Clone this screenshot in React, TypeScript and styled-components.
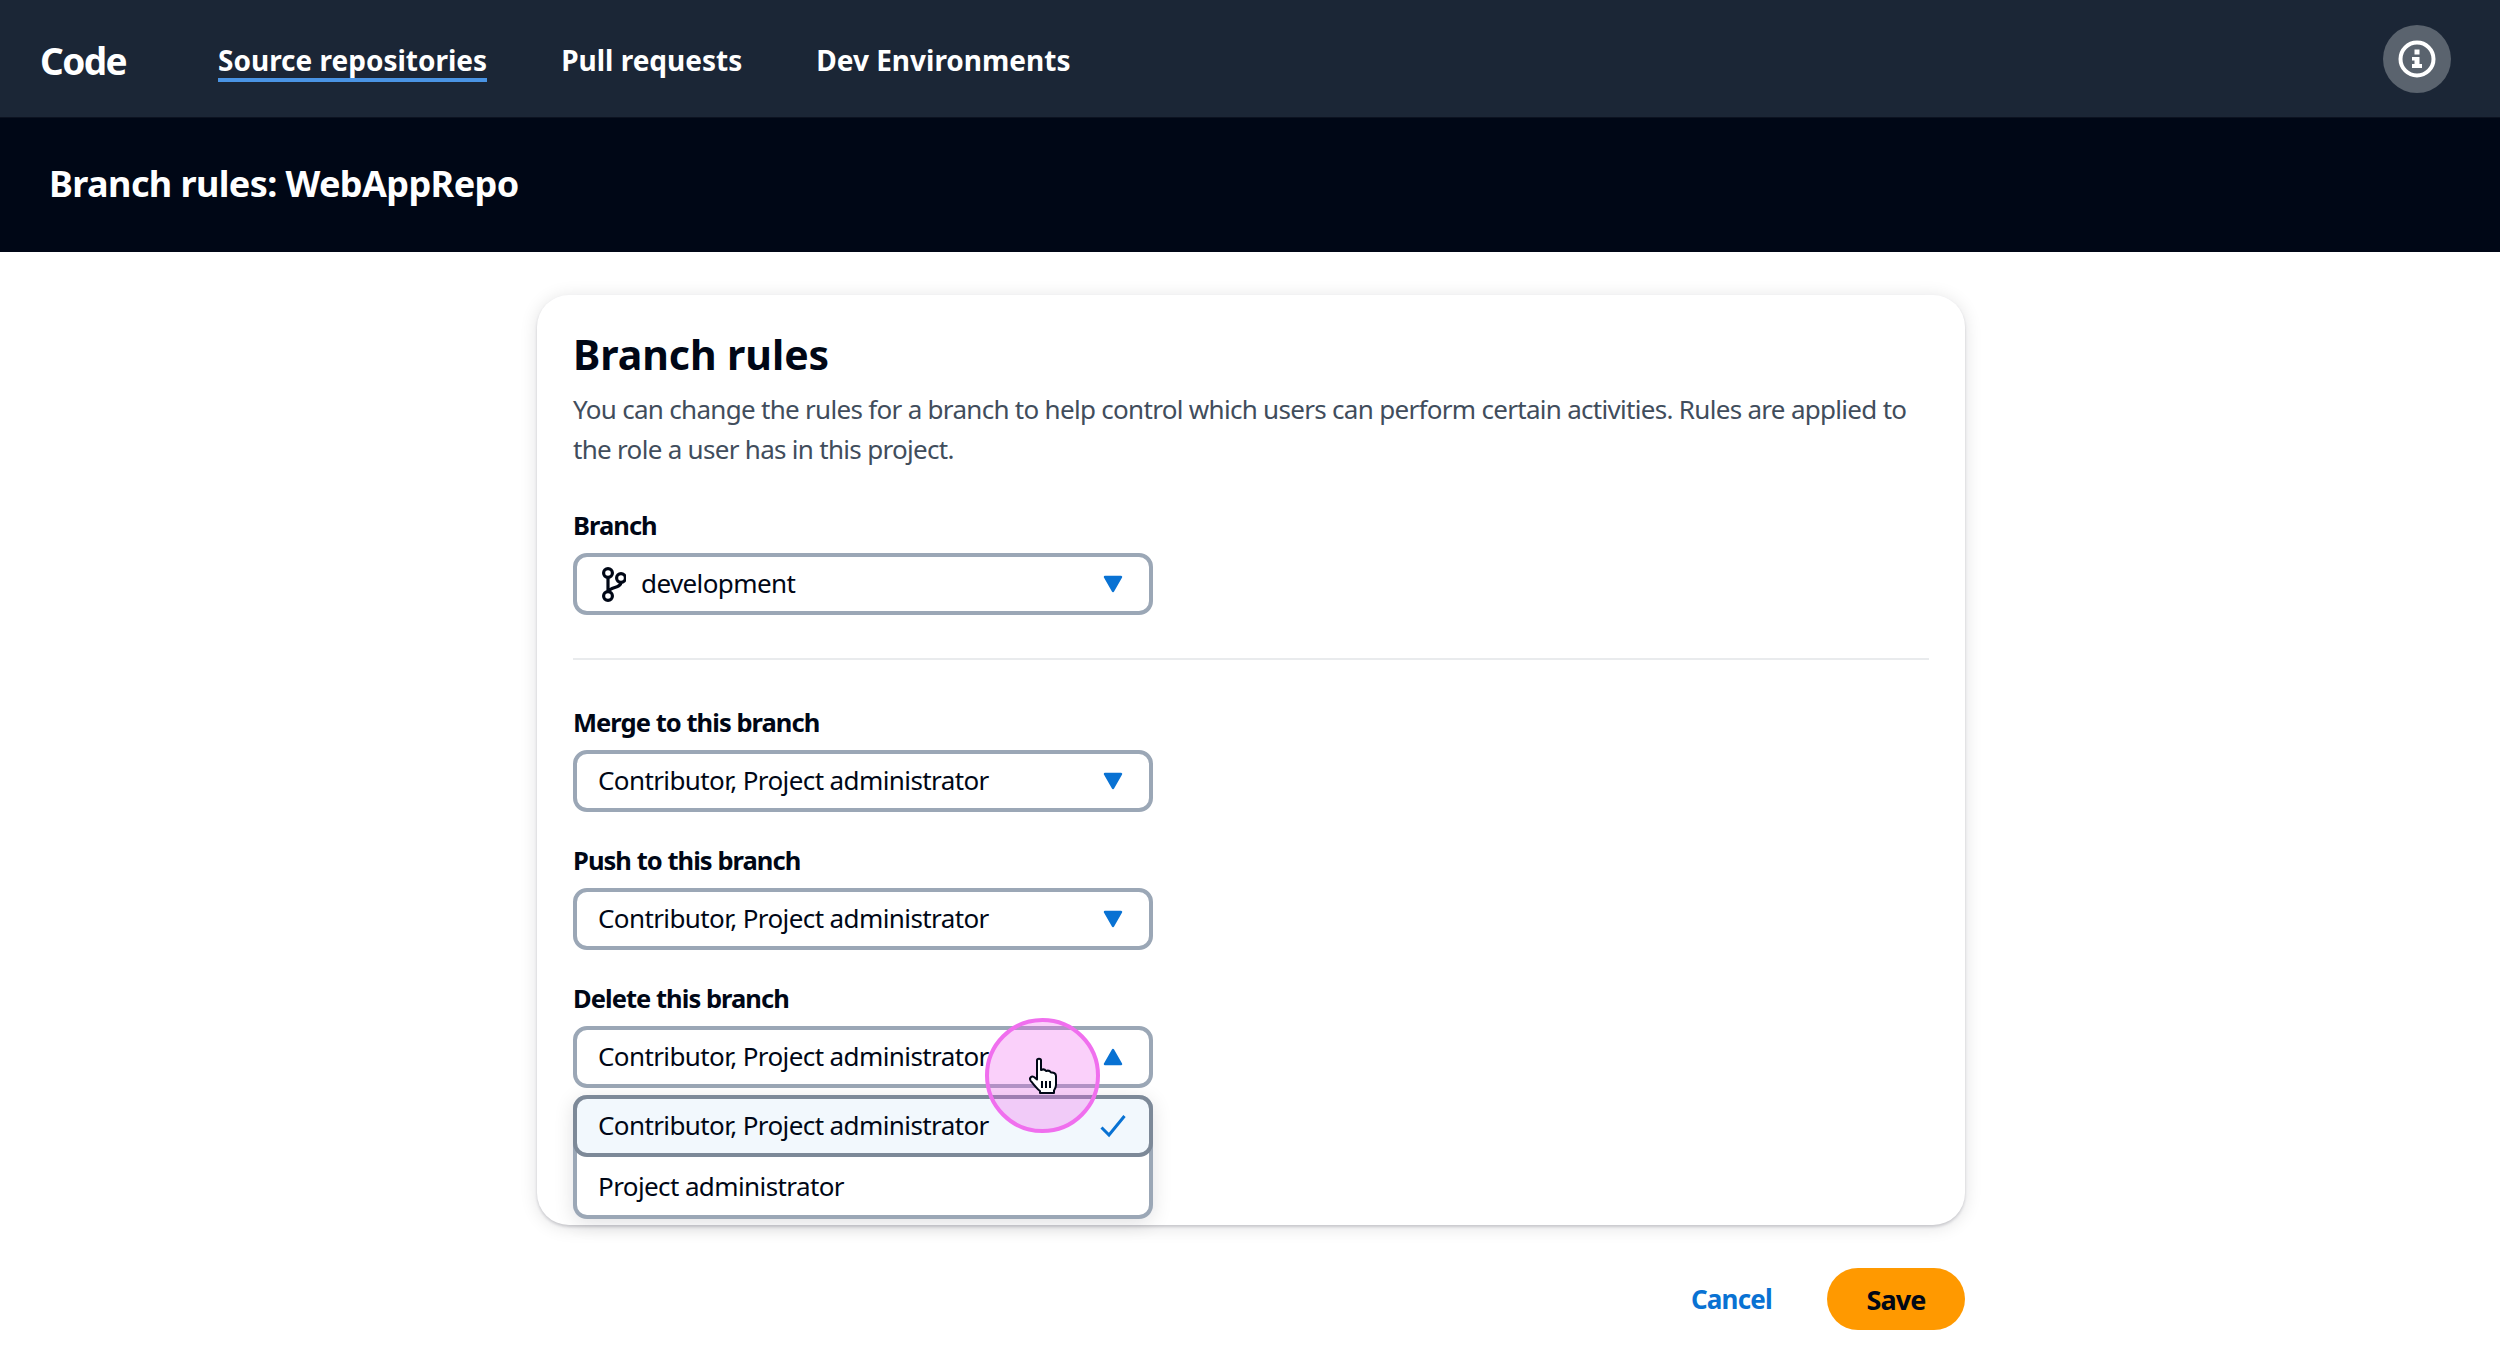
import React from 'react';
import styled, { createGlobalStyle } from 'styled-components';

const GlobalStyle = createGlobalStyle`
  html, body {
    margin: 0;
    padding: 0;
    background: #ffffff;
    font-family: 'Noto Sans', 'Open Sans', sans-serif;
    color: #000716;
  }
`;

const Page = styled.div`
  width: 2500px;
  height: 1345px;
  overflow: hidden;
  display: flex;
  flex-direction: column;
`;

const TopNav = styled.header`
  height: 117px;
  background: #1b2636;
  display: flex;
  align-items: center;
  padding: 3px 49px 0 40px;
  box-sizing: border-box;
  flex-shrink: 0;
`;

const Brand = styled.div`
  font-size: 37px;
  font-weight: 700;
  color: #ffffff;
  letter-spacing: -1.6px;
  width: 178px;
`;

const NavLinks = styled.nav`
  display: flex;
  gap: 74px;
  flex: 1;
`;

const NavLink = styled.a<{ $active?: boolean }>`
  position: relative;
  font-size: 28px;
  font-weight: 700;
  letter-spacing: 0;
  color: #ffffff;

  ${(p) =>
    p.$active &&
    `&::after {
      content: '';
      position: absolute;
      left: 0;
      right: 0;
      bottom: -3px;
      height: 4px;
      background: #4a94e4;
    }`}
`;

const InfoButton = styled.button`
  width: 68px;
  height: 68px;
  margin-top: -2px;
  border-radius: 50%;
  border: none;
  padding: 0;
  background: #5a636e;
  display: flex;
  align-items: center;
  justify-content: center;
`;

const SubHeader = styled.div`
  height: 135px;
  background: #000716;
  border-top: 1px solid #0c1220;
  box-sizing: border-box;
  display: flex;
  align-items: center;
  padding: 0 0 3px 49px;
  flex-shrink: 0;
`;

const SubTitle = styled.h1`
  margin: 0;
  font-size: 36px;
  font-weight: 700;
  letter-spacing: -0.6px;
  color: #ffffff;
`;

const Main = styled.main`
  width: 1428px;
  margin: 43px 0 0 537px;
  display: flex;
  flex-direction: column;
`;

const Card = styled.section`
  box-sizing: border-box;
  height: 930px;
  padding: 32px 36px 0;
  background: #ffffff;
  border-radius: 32px;
  box-shadow: 0 2px 3px rgba(0, 7, 22, 0.16), 0 2px 18px rgba(0, 7, 22, 0.12);
`;

const CardTitle = styled.h2`
  margin: 0;
  font-size: 41px;
  line-height: 54px;
  font-weight: 700;
  letter-spacing: -0.05px;
  color: #000716;
`;

const Description = styled.p`
  margin: 8px 0 0;
  font-size: 26px;
  line-height: 40px;
  letter-spacing: -0.7px;
  color: #414d5c;
`;

const Field = styled.div<{ $top: number }>`
  margin-top: ${(p) => p.$top}px;
`;

const Label = styled.label`
  display: block;
  font-size: 25.5px;
  line-height: 36px;
  font-weight: 700;
  letter-spacing: -0.95px;
  color: #000716;
  margin-bottom: 10px;
`;

const Select = styled.div`
  box-sizing: border-box;
  width: 580px;
  height: 62px;
  border: 4px solid #9ba7b6;
  border-radius: 14px;
  background: #ffffff;
  display: flex;
  align-items: center;
  padding: 0 26px 0 21px;
  font-size: 26px;
  letter-spacing: -0.6px;
  color: #000716;
`;

const SelectText = styled.span`
  flex: 1;
  white-space: nowrap;
  margin-top: -2px;
`;

const BranchGlyph = styled.svg`
  margin: 0 15px 0 4px;
  flex-shrink: 0;
`;

const Divider = styled.hr`
  border: none;
  height: 2px;
  background: #e9ebed;
  margin: 43px 0 0;
`;

const DeleteField = styled.div`
  position: relative;
  margin-top: 30px;
`;

const Menu = styled.div`
  box-sizing: border-box;
  width: 580px;
  height: 124px;
  margin-top: 7px;
  border: 4px solid #9ba7b6;
  border-top: none;
  border-radius: 14px;
  background: #ffffff;
  box-shadow: 0 4px 20px rgba(0, 7, 22, 0.12);
  display: flex;
  flex-direction: column;
`;

const MenuRow = styled.div<{ $selected?: boolean }>`
  box-sizing: border-box;
  display: flex;
  align-items: center;
  font-size: 26px;
  letter-spacing: -0.6px;
  color: #000716;
  ${(p) =>
    p.$selected
      ? `
    width: 580px;
    margin-left: -4px;
    height: 62px;
    padding: 0 23px 0 21px;
    border: 4px solid #7d8998;
    border-radius: 14px;
    background: #f2f8fd;
  `
      : `
    flex: 1;
    padding: 0 21px;
  `}
`;

const Highlight = styled.div`
  position: absolute;
  left: 412px;
  top: 38px;
  width: 115px;
  height: 115px;
  box-sizing: border-box;
  border-radius: 50%;
  border: 4px solid #f06fee;
  background: rgba(238, 100, 240, 0.3);
  display: flex;
  align-items: center;
  justify-content: center;
`;

const Actions = styled.div`
  display: flex;
  justify-content: flex-end;
  align-items: center;
  gap: 55px;
  margin-top: 43px;
`;

const CancelLink = styled.a`
  font-size: 26px;
  font-weight: 700;
  letter-spacing: -0.8px;
  color: #0972d3;
`;

const SaveButton = styled.button`
  width: 138px;
  height: 62px;
  border: none;
  border-radius: 31px;
  background: #ff9900;
  font-family: inherit;
  font-size: 27px;
  font-weight: 700;
  letter-spacing: -0.9px;
  color: #000716;
`;

const Caret = ({ up }: { up?: boolean }) => (
  <svg width="20" height="18" viewBox="0 0 20 18">
    <path
      d={up ? 'M10 2 L18 16 H2 Z' : 'M10 16 L18 2 H2 Z'}
      fill="#0972d3"
      stroke="#0972d3"
      strokeWidth="2.5"
      strokeLinejoin="round"
    />
  </svg>
);

const Check = () => (
  <svg width="26" height="24" viewBox="0 0 26 24">
    <path d="M1.5 13.5 L9 21 L24.5 2" fill="none" stroke="#0972d3" strokeWidth="3" />
  </svg>
);

const BranchIcon = () => (
  <BranchGlyph width="24" height="36" viewBox="0 0 24 36" fill="none" stroke="#000716" strokeWidth="3.2">
    <circle cx="6" cy="7" r="4.4" />
    <circle cx="6" cy="30" r="4.4" />
    <circle cx="19" cy="12" r="4.4" />
    <path d="M6 11 V26 M19 16 C19 23 8 20 6.5 26" />
  </BranchGlyph>
);

const InfoIcon = () => (
  <svg width="38" height="38" viewBox="0 0 38 38">
    <circle cx="19" cy="19" r="16.5" fill="none" stroke="#ffffff" strokeWidth="4" />
    <rect x="16.5" y="9.5" width="5" height="5" fill="#ffffff" />
    <path d="M14 17 H21.5 V24 H24 V28 H14 V24 H16.5 V20.5 H14 Z" fill="#ffffff" />
  </svg>
);

const HandCursor = () => (
  <svg width="30" height="38" viewBox="0 0 30 38">
    <path
      d="M9 3.5 C9 1 13 1 13 3.5 V13 C15 12 17 12.5 18 14 C20 13.2 22 14 23 15.5 C25.5 15 28 16.5 28 19 V28 C28 30 27 32 26 33.5 V36 H12 V34 C9 32 6 28 2.5 23.5 C1 21 3.5 18.5 6 20 L9 22.5 Z"
      fill="#ffffff"
      stroke="#000716"
      strokeWidth="2"
      strokeLinejoin="round"
    />
    <path d="M14 24 V31 M18 24 V31 M22 24 V31" stroke="#000716" strokeWidth="2" />
  </svg>
);

const ROLES = 'Contributor, Project administrator';

const App: React.FC = () => {
  return (
    <Page>
      <GlobalStyle />
      <TopNav>
        <Brand>Code</Brand>
        <NavLinks>
          <NavLink $active>Source repositories</NavLink>
          <NavLink>Pull requests</NavLink>
          <NavLink>Dev Environments</NavLink>
        </NavLinks>
        <InfoButton aria-label="Info">
          <InfoIcon />
        </InfoButton>
      </TopNav>
      <SubHeader>
        <SubTitle>Branch rules: WebAppRepo</SubTitle>
      </SubHeader>
      <Main>
        <Card>
          <CardTitle>Branch rules</CardTitle>
          <Description>
            You can change the rules for a branch to help control which users can perform certain activities. Rules are
            applied to the role a user has in this project.
          </Description>
          <Field $top={38}>
            <Label>Branch</Label>
            <Select>
              <BranchIcon />
              <SelectText>development</SelectText>
              <Caret />
            </Select>
          </Field>
          <Divider />
          <Field $top={44}>
            <Label>Merge to this branch</Label>
            <Select>
              <SelectText>{ROLES}</SelectText>
              <Caret />
            </Select>
          </Field>
          <Field $top={30}>
            <Label>Push to this branch</Label>
            <Select>
              <SelectText>{ROLES}</SelectText>
              <Caret />
            </Select>
          </Field>
          <DeleteField>
            <Label>Delete this branch</Label>
            <Select>
              <SelectText>{ROLES}</SelectText>
              <Caret up />
            </Select>
            <Menu>
              <MenuRow $selected>
                <SelectText>{ROLES}</SelectText>
                <Check />
              </MenuRow>
              <MenuRow>Project administrator</MenuRow>
            </Menu>
            <Highlight>
              <HandCursor />
            </Highlight>
          </DeleteField>
        </Card>
        <Actions>
          <CancelLink>Cancel</CancelLink>
          <SaveButton>Save</SaveButton>
        </Actions>
      </Main>
    </Page>
  );
};

export default App;
